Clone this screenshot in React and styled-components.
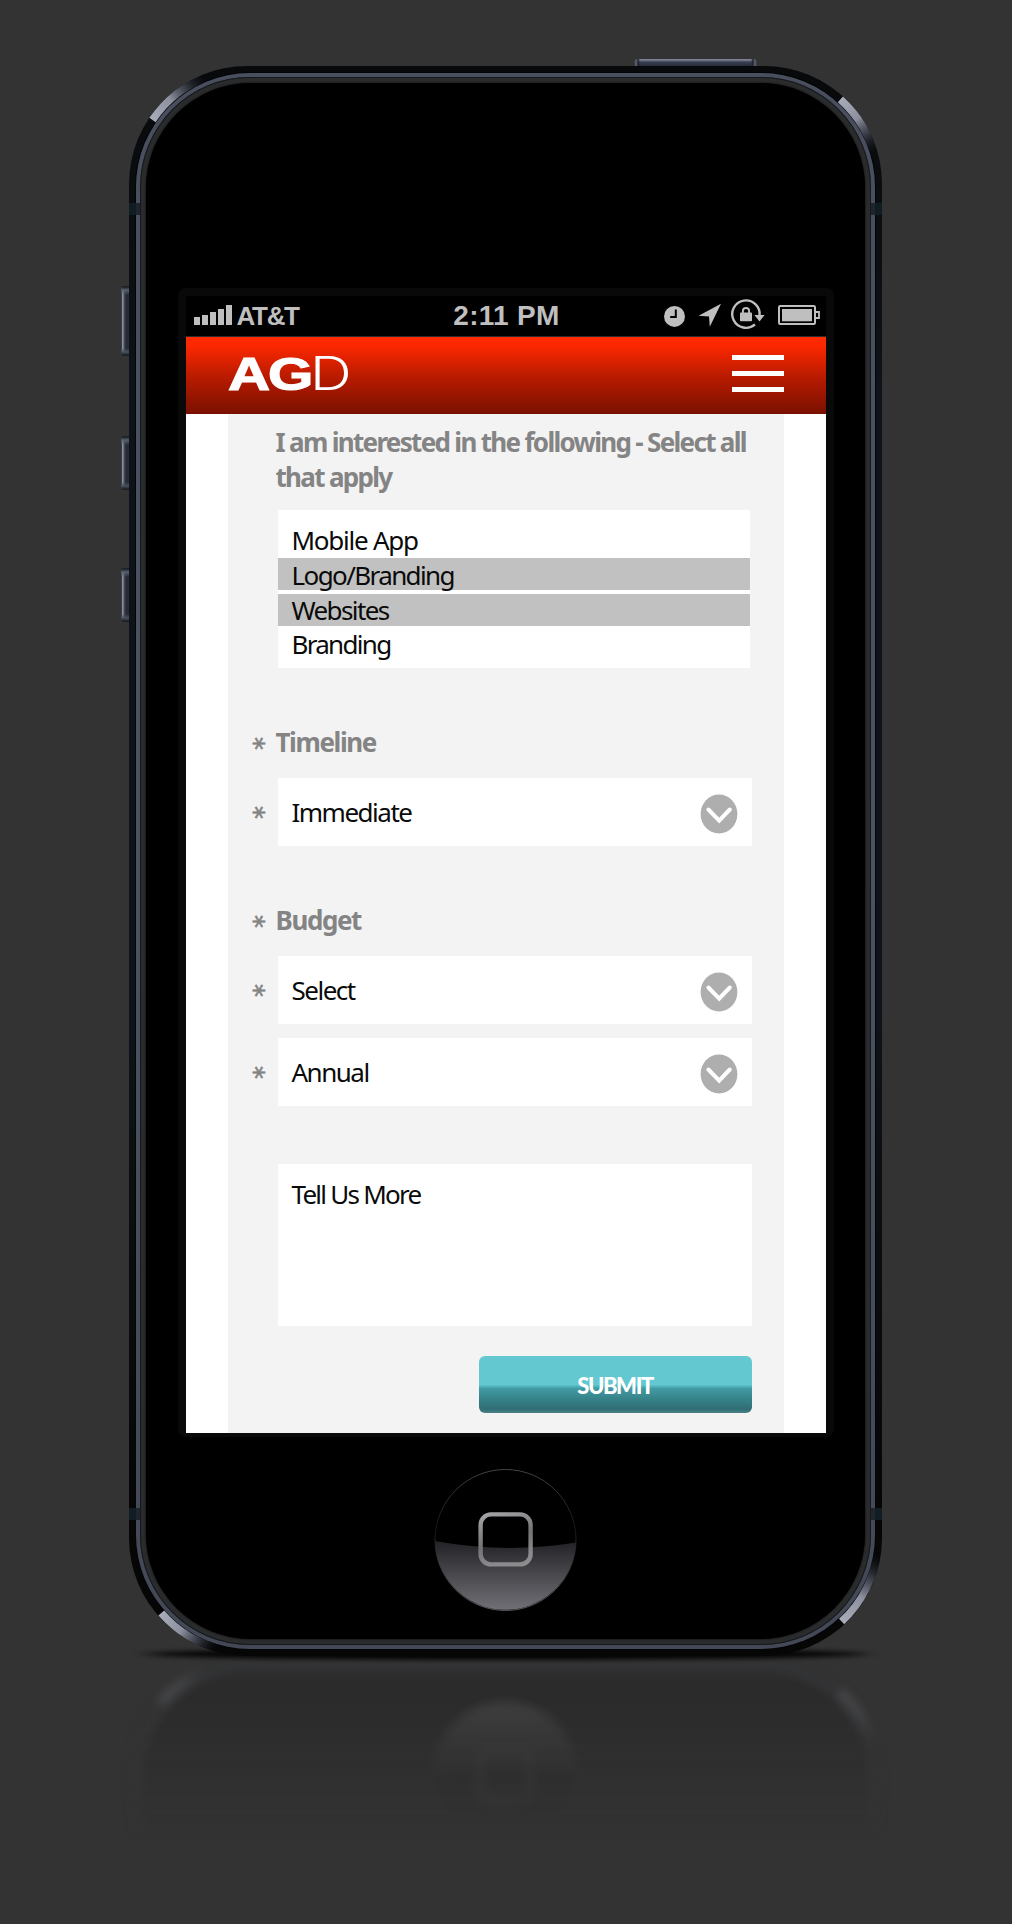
import React from "react";
import styled, { createGlobalStyle } from "styled-components";

const GlobalStyle = createGlobalStyle`
  html, body { margin: 0; padding: 0; background: #333333; }
  * { box-sizing: border-box; }
`;

const bodyFont = `"Noto Sans", "Open Sans", sans-serif`;
const systemFont = `"Liberation Sans", Arial, sans-serif`;

const Stage = styled.main`
  position: relative;
  width: 1012px;
  height: 1924px;
  padding: 66px 0 0 129px;
  overflow: hidden;
  background: #333333;
`;

/* ---------- device ---------- */

const Shell = styled.div`
  position: relative;
  width: 753px;
  height: 1590px;
  padding: 7px;
  border-radius: 118px;
  background: linear-gradient(#08090b, #0d1318 20%, #0d1318 60%, #060607 90%);
`;

const Rim = styled.div`
  height: 100%;
  padding: 4px;
  border-radius: 114px;
  background: linear-gradient(#484e5d, #4b5260 50%, #424856);
  box-shadow: 0 0 0 1px #030405;
`;

const Gasket = styled.div`
  height: 100%;
  padding: 6px;
  border-radius: 110px;
  background: #2a2b2c;
  box-shadow: inset 0 0 0 1px #15181c;
`;

const Face = styled.div`
  display: flex;
  flex-direction: column;
  align-items: center;
  height: 100%;
  padding-top: 205px;
  border-radius: 105px;
  background: #000;
  box-shadow: 0 0 2px #000;
`;

const SideKey = styled.span`
  position: absolute;
  left: -8px;
  top: ${(p) => p.$top}px;
  width: 8px;
  height: ${(p) => p.$height}px;
  border-radius: 3px 0 0 3px;
  background:
    linear-gradient(#1b1f26 0 1px, #5a6070 4px, transparent 9px calc(100% - 8px), #4a5060 calc(100% - 4px), #1b1f26 calc(100% - 1px)),
    linear-gradient(90deg, #3a3d44 0 1px, #8a90a0 1px 2px, #4a4f5c 3px, #262b35 5px);
`;

const PowerKey = styled.span`
  position: absolute;
  left: 505px;
  top: -7px;
  width: 123px;
  height: 7px;
  border-radius: 3px 3px 0 0;
  background:
    linear-gradient(90deg, #3a3d44 0 1px, #6b7080 2px, #1b1f26 4px, transparent 6px calc(100% - 6px), #1b1f26 calc(100% - 4px), #6b7080 calc(100% - 2px), #3a3d44 calc(100% - 1px)),
    linear-gradient(#7b8191 0 1px, #3a4050 3px, #272c38);
`;

const AntennaBand = styled.span`
  position: absolute;
  top: ${(p) => p.$top}px;
  ${(p) => p.$side}: 0;
  width: 11px;
  height: 12px;
  background: ${(p) => (p.$side === "left"
    ? "linear-gradient(90deg, #101d23 7px, #20242d 7px)"
    : "linear-gradient(270deg, #101d23 7px, #20242d 7px)")};
`;

const Overlay = styled.svg`
  position: absolute;
  left: 0;
  top: 0;
  pointer-events: none;
`;

const ScreenFrame = styled.div`
  padding: 8px 8px 4px;
  border-radius: 8px;
  background: #090909;
`;

const Screen = styled.div`
  width: 640px;
  height: 1137px;
  overflow: hidden;
  background: #fff;
`;

/* ---------- status bar ---------- */

const StatusBar = styled.div`
  display: grid;
  grid-template-columns: 1fr auto 1fr;
  height: 41px;
  padding: 0 6px 0 8px;
  border-bottom: 1px solid #2b2b2b;
  background: #000;
  color: #bfbfbf;
  font-family: ${systemFont};
  font-weight: 700;
  line-height: 40px;
`;

const Carrier = styled.div`
  display: flex;
  align-items: center;
  gap: 5px;
  font-size: 26px;
  letter-spacing: -1.3px;
`;

const Signal = styled.div`
  display: flex;
  align-items: flex-end;
  gap: 2px;
  height: 20px;
  margin-top: -2px;
`;

const SignalBar = styled.span`
  width: 6px;
  height: ${(p) => p.$height}px;
  background: #bfbfbf;
`;

const Clock = styled.div`
  font-size: 28px;
  line-height: 39px;
  letter-spacing: 0.3px;
`;

const StatusIcons = styled.div`
  display: flex;
  justify-content: flex-end;
  height: 40px;
`;

/* ---------- app header ---------- */

const Header = styled.header`
  display: flex;
  align-items: flex-start;
  justify-content: space-between;
  height: 77px;
  padding: 0 42px;
  background: linear-gradient(#ff2a00 0, #fb2700 12%, #b81b00 52%, #7a1000 100%);
`;

const Logo = styled.div`
  display: flex;
  align-items: baseline;
  height: 77px;
  color: #fff;
  line-height: 73px;
`;

const LogoHeavy = styled.span`
  width: 84px;
  font-family: ${systemFont};
  font-weight: 700;
  font-size: 47px;
  letter-spacing: -1.6px;
  -webkit-text-stroke: 1.2px #fff;
  transform: scaleX(1.24);
  transform-origin: 0 50%;
`;

const LogoLight = styled.span`
  margin-left: -2px;
  font-family: Inter, ${systemFont};
  font-weight: 300;
  font-size: 46px;
  transform: scaleX(1.26);
  transform-origin: 0 50%;
`;

const MenuButton = styled.button`
  display: flex;
  flex-direction: column;
  gap: 11px;
  margin: 18px 0 0;
  padding: 0;
  border: 0;
  background: none;
`;

const MenuLine = styled.span`
  width: 52px;
  height: 5px;
  background: #fff;
`;

/* ---------- form ---------- */

const Form = styled.form`
  display: flex;
  flex-direction: column;
  width: 556px;
  height: 1019px;
  margin: 0 auto;
  padding: 11px 32px 0 0;
  background: #f3f3f3;
  font-family: ${bodyFont};
  font-size: 26px;
  color: #0a0a0a;
`;

const Row = styled.div`
  display: flex;
  align-items: center;
  margin-top: ${(p) => p.$gap || 0}px;
`;

const Star = styled.span`
  display: flex;
  justify-content: center;
  width: 50px;
  padding-left: 13px;
  color: #848484;
`;

const StarGlyph = styled.span`
  width: 12px;
  height: 12px;
  line-height: 22px;
  font-family: "DejaVu Sans", sans-serif;
  font-size: 26px;
  -webkit-text-stroke: 0.6px #848484;
  text-align: center;
  transform: rotate(90deg);
`;

const Label = styled.h2`
  margin: ${(p) => (p.$wide ? "0 -24px 0 48px" : "0 0 0 -2px")};
  color: #848484;
  font-size: 26px;
  font-weight: 700;
  line-height: 35px;
  letter-spacing: ${(p) => (p.$wide ? -1.68 : -1.4)}px;
`;

const OptionList = styled.ul`
  width: 472px;
  height: 158px;
  margin: 15px 0 0 50px;
  padding: 14px 0 0;
  list-style: none;
  background: #fff;
`;

const Option = styled.li`
  height: 32px;
  margin-bottom: ${(p) => p.$after}px;
  padding-left: 14px;
  line-height: ${(p) => p.$line || 32}px;
  letter-spacing: ${(p) => p.$spacing || -1.5}px;
  background: ${(p) => (p.$selected ? "#c1c1c1" : "transparent")};
`;

const SelectBox = styled.div`
  display: flex;
  align-items: center;
  justify-content: space-between;
  width: 474px;
  height: 68px;
  padding: 0 14px;
  background: #fff;
  letter-spacing: -1.5px;
`;

const Badge = styled.svg`
  margin-top: 3px;
`;

const TextArea = styled.div`
  width: 474px;
  height: 162px;
  margin: 58px 0 0 50px;
  padding: 13px 14px;
  background: #fff;
  line-height: 35px;
  letter-spacing: -1.75px;
`;

const Submit = styled.button`
  align-self: flex-end;
  width: 273px;
  height: 57px;
  margin-top: 30px;
  padding: 2px 0 0;
  border: 0;
  border-radius: 6px;
  background: linear-gradient(#63c8d0 0, #63c8d0 50%, #429ba3 57%, #37838a 75%, #2f6e75 93%, #4b8288 100%);
  color: #fff;
  font-family: Lato, ${bodyFont};
  font-weight: 900;
  font-size: 22px;
  line-height: 55px;
  letter-spacing: -1.4px;
`;

const HomeButton = styled.button`
  width: 144px;
  height: 144px;
  margin: 31px 0 0;
  padding: 0;
  border: 0;
  background: none;
`;

const Reflection = styled.svg`
  position: absolute;
  left: 0;
  top: 1640px;
  pointer-events: none;
`;

/* ---------- drawings ---------- */

const StatusGlyphs = () => (
  <svg width="160" height="40" viewBox="660 296 160 40" fill="#bfbfbf">
    <circle cx="674.5" cy="316.4" r="10.5" />
    <path d="M675.8 309.6v7.4h-5.6" fill="none" stroke="#000" strokeWidth="2" />
    <path d="M698.6 315.8L721 303.8L709.8 326.8L709 316.6Z" />
    <path d="M759.6 315.5A13.7 13.7 0 1 0 755 324.4" fill="none" stroke="#bfbfbf" strokeWidth="2.4" />
    <path d="M754.4 315h10.2l-5.1 6.6z" />
    <rect x="740" y="312.6" width="12" height="8.6" rx="0.8" />
    <path d="M742.9 313.5v-2.4a3.1 3.1 0 0 1 6.2 0v2.4" fill="none" stroke="#bfbfbf" strokeWidth="1.9" />
    <rect x="779" y="306" width="36" height="18" rx="1.2" fill="none" stroke="#bfbfbf" strokeWidth="2" />
    <rect x="782" y="309" width="30" height="12.3" />
    <path d="M816 312h3v6h-3" fill="none" stroke="#bfbfbf" strokeWidth="1.8" />
  </svg>
);

const ArrowBadge = () => (
  <Badge width="38" height="40" viewBox="0 0 38 40">
    <ellipse cx="19" cy="20" rx="18.4" ry="19.6" fill="#aeaeae" />
    <path d="M8.4 15.5L19.2 26.6L29.8 15.5" fill="none" stroke="#fff" strokeWidth="4" strokeLinecap="round" />
  </Badge>
);

const HomeArt = ({ id, markOpacity = 1 }) => (
  <g>
    <defs>
      <linearGradient id={`${id}-glass`} x1="0" y1="0" x2="0" y2="1">
        <stop offset="0" stopColor="#222226" />
        <stop offset="1" stopColor="#707076" />
      </linearGradient>
      <linearGradient id={`${id}-edge`} x1="0" y1="0" x2="0" y2="1">
        <stop offset="0" stopColor="#444" />
        <stop offset="0.4" stopColor="#161617" />
        <stop offset="1" stopColor="#55555a" />
      </linearGradient>
      <linearGradient id={`${id}-mark`} x1="0" y1="0" x2="0.3" y2="1">
        <stop offset="0" stopColor="#a5a5a8" />
        <stop offset="0.6" stopColor="#737376" />
        <stop offset="1" stopColor="#8b8b8e" />
      </linearGradient>
    </defs>
    <circle cx="71.5" cy="72" r="70.5" fill="#000" stroke={`url(#${id}-edge)`} strokeWidth="1" />
    <path d="M0.9 73Q72 86 142 74.5A70.6 70.6 0 0 1 0.9 73Z" fill={`url(#${id}-glass)`} />
    <rect x="46.6" y="46.4" width="50" height="50" rx="10.5" fill="none" stroke={`url(#${id}-mark)`} strokeWidth="4.4" opacity={markOpacity} />
  </g>
);

const glints = [
  { id: "tl", d: "M23.5 54A114 114 0 0 1 80 10.5", x1: 23, y1: 54, x2: 76, y2: 12 },
  { id: "tr", d: "M711.4 33.4A114 114 0 0 1 746.5 94.2", x1: 712, y1: 33, x2: 746, y2: 86 },
  { id: "bl", d: "M32.3 1547A114 114 0 0 0 92 1583", x1: 32, y1: 1547, x2: 88, y2: 1582 },
  { id: "br", d: "M712.6 1555.5A114 114 0 0 0 748.4 1483.8", x1: 713, y1: 1556, x2: 748, y2: 1488 },
];

const Glints = ({ prefix, only }) => (
  <g fill="none" strokeWidth="7.6">
    {glints
      .filter((g) => !only || only.includes(g.id))
      .map((g) => (
        <g key={g.id}>
          <linearGradient id={prefix + g.id} gradientUnits="userSpaceOnUse" x1={g.x1} y1={g.y1} x2={g.x2} y2={g.y2}>
            <stop offset="0" stopColor="#a9adba" />
            <stop offset="0.4" stopColor="#8d919f" />
            <stop offset="0.7" stopColor="#3f444f" stopOpacity="0.8" />
            <stop offset="1" stopColor="#15191e" stopOpacity="0" />
          </linearGradient>
          <path d={g.d} stroke={`url(#${prefix}${g.id})`} />
        </g>
      ))}
  </g>
);

const FloorReflection = () => (
  <Reflection width="1012" height="284" viewBox="0 1640 1012 284">
    <defs>
      <linearGradient id="fade" gradientUnits="userSpaceOnUse" x1="0" y1="1656" x2="0" y2="1840">
        <stop offset="0" stopColor="#fff" stopOpacity="0.21" />
        <stop offset="0.35" stopColor="#fff" stopOpacity="0.17" />
        <stop offset="1" stopColor="#fff" stopOpacity="0" />
      </linearGradient>
      <mask id="floor" maskUnits="userSpaceOnUse" x="0" y="1640" width="1012" height="284">
        <rect x="0" y="1659" width="1012" height="260" fill="url(#fade)" />
      </mask>
      <filter id="soft" x="-5%" y="-5%" width="110%" height="110%">
        <feGaussianBlur stdDeviation="4" />
      </filter>
      <filter id="shade" x="-10%" y="-200%" width="120%" height="500%">
        <feGaussianBlur stdDeviation="9 2.5" />
      </filter>
    </defs>
    <g mask="url(#floor)">
      <g filter="url(#soft)">
        <g transform="translate(129 3248) scale(1 -1)">
          <rect x="0" y="900" width="753" height="690" rx="118" fill="#2c2d30" />
          <rect x="9" y="900" width="735" height="681" rx="109" fill="#0a0a0a" stroke="#3c404a" strokeWidth="5" />
          <Glints prefix="r" only={["bl", "br"]} />
          <g transform="translate(304.5 1401.5)">
            <HomeArt id="mirror" markOpacity={0.5} />
          </g>
        </g>
      </g>
    </g>
    <ellipse cx="506" cy="1654" rx="362" ry="5.5" fill="#000" filter="url(#shade)" />
  </Reflection>
);

const Required = () => (
  <Star>
    <StarGlyph>*</StarGlyph>
  </Star>
);

const Dropdown = ({ gap, children }) => (
  <Row $gap={gap}>
    <Required />
    <SelectBox>
      {children}
      <ArrowBadge />
    </SelectBox>
  </Row>
);

const options = [
  { text: "Mobile App", after: 2, spacing: -1.25 },
  { text: "Logo/Branding", after: 4, selected: true, line: 34, spacing: -1.6 },
  { text: "Websites", after: 2, selected: true, spacing: -1.6 },
  { text: "Branding", after: 0, spacing: -1.7 },
];

export default function App() {
  return (
    <>
      <GlobalStyle />
      <Stage>
        <FloorReflection />
        <Shell>
          <SideKey $top={220} $height={70} />
          <SideKey $top={370} $height={54} />
          <SideKey $top={502} $height={54} />
          <PowerKey />
          <Rim>
            <Gasket>
              <Face>
                <ScreenFrame>
                  <Screen>
                    <StatusBar>
                      <Carrier>
                        <Signal>
                          {[8, 10, 13, 16, 20].map((h) => (
                            <SignalBar key={h} $height={h} />
                          ))}
                        </Signal>
                        AT&amp;T
                      </Carrier>
                      <Clock>2:11 PM</Clock>
                      <StatusIcons>
                        <StatusGlyphs />
                      </StatusIcons>
                    </StatusBar>
                    <Header>
                      <Logo>
                        <LogoHeavy>AG</LogoHeavy>
                        <LogoLight>D</LogoLight>
                      </Logo>
                      <MenuButton type="button" aria-label="Menu">
                        <MenuLine />
                        <MenuLine />
                        <MenuLine />
                      </MenuButton>
                    </Header>
                    <Form>
                      <Label $wide>
                        I am interested in the following - Select all
                        <br />
                        that apply
                      </Label>
                      <OptionList>
                        {options.map((o) => (
                          <Option key={o.text} $after={o.after} $selected={o.selected} $line={o.line} $spacing={o.spacing}>
                            {o.text}
                          </Option>
                        ))}
                      </OptionList>
                      <Row $gap={57}>
                        <Required />
                        <Label>Timeline</Label>
                      </Row>
                      <Dropdown gap={18}>Immediate</Dropdown>
                      <Row $gap={57}>
                        <Required />
                        <Label>Budget</Label>
                      </Row>
                      <Dropdown gap={18}>Select</Dropdown>
                      <Dropdown gap={14}>Annual</Dropdown>
                      <TextArea>Tell Us More</TextArea>
                      <Submit type="button">SUBMIT</Submit>
                    </Form>
                  </Screen>
                </ScreenFrame>
                <HomeButton type="button" aria-label="Home">
                  <svg width="144" height="144" viewBox="0 0 144 144">
                    <HomeArt id="home" />
                  </svg>
                </HomeButton>
              </Face>
            </Gasket>
          </Rim>
          <AntennaBand $side="left" $top={137} />
          <AntennaBand $side="right" $top={137} />
          <AntennaBand $side="left" $top={1442} />
          <AntennaBand $side="right" $top={1442} />
          <Overlay width="753" height="1590" viewBox="0 0 753 1590">
            <Glints prefix="g" />
          </Overlay>
        </Shell>
      </Stage>
    </>
  );
}
